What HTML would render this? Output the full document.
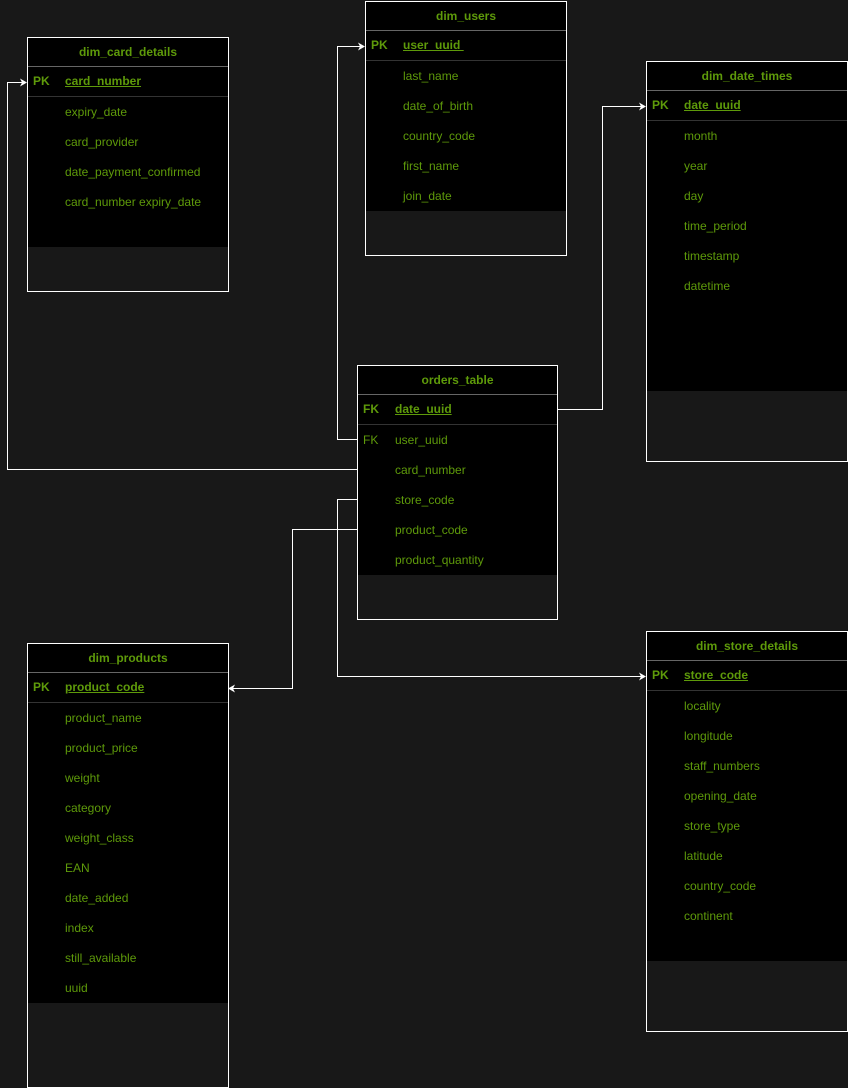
<!DOCTYPE html>
<html><head><style>
body{margin:0;width:848px;height:1081px;background:#181818;position:relative;overflow:hidden;font-family:"Liberation Sans",sans-serif;font-size:12px;color:#5e9a0a}
.t{position:absolute;border:1px solid #fff;box-sizing:border-box}
.h{height:28px;line-height:29px;text-align:center;font-weight:bold;background:#000;border-bottom:1px solid #666}
.r{height:30px;line-height:30px;background:#000;position:relative}
.r .k{position:absolute;left:5px;top:0}
.r .n{position:absolute;left:37px;top:0}
.pk{border-bottom:1px solid #333;height:29px;line-height:29px}
.pk .k{font-weight:bold}
.pk .n{font-weight:bold;text-decoration:underline}
svg{position:absolute;left:0;top:0}
</style></head><body>
<svg width="848" height="1081">
<g stroke="#fff" fill="none" stroke-width="1">
<polyline points="357.5,469.5 7.5,469.5 7.5,82.5 22,82.5"/>
<polyline points="357.5,439.5 337.5,439.5 337.5,46.5 360,46.5"/>
<polyline points="557.5,409.5 602.5,409.5 602.5,106.5 641,106.5"/>
<polyline points="357.5,529.5 292.5,529.5 292.5,688.5 233,688.5"/>
<polyline points="357.5,499.5 337.5,499.5 337.5,676.5 641,676.5"/>
</g>
<g fill="#fff">
<polygon points="27,82.5 20,78.5 22,82.5 20,86.5"/>
<polygon points="365,46.5 358,42.5 360,46.5 358,50.5"/>
<polygon points="646,106.5 639,102.5 641,106.5 639,110.5"/>
<polygon points="228,688.5 235,684.5 233,688.5 235,692.5"/>
<polygon points="646,676.5 639,672.5 641,676.5 639,680.5"/>
</g>
</svg>

<div class="t" style="left:27px;top:37px;width:202px;height:255px">
<div class="h">dim_card_details</div>
<div class="r pk"><span class="k">PK</span><span class="n">card_number</span></div>
<div class="r"><span class="n">expiry_date</span></div>
<div class="r"><span class="n">card_provider</span></div>
<div class="r"><span class="n">date_payment_confirmed</span></div>
<div class="r"><span class="n">card_number expiry_date</span></div>
<div class="r"></div>
</div>

<div class="t" style="left:365px;top:1px;width:202px;height:255px">
<div class="h">dim_users</div>
<div class="r pk"><span class="k">PK</span><span class="n">user_uuid&nbsp;</span></div>
<div class="r"><span class="n">last_name</span></div>
<div class="r"><span class="n">date_of_birth</span></div>
<div class="r"><span class="n">country_code</span></div>
<div class="r"><span class="n">first_name</span></div>
<div class="r"><span class="n">join_date</span></div>
</div>

<div class="t" style="left:646px;top:61px;width:202px;height:401px">
<div class="h">dim_date_times</div>
<div class="r pk"><span class="k">PK</span><span class="n">date_uuid</span></div>
<div class="r"><span class="n">month</span></div>
<div class="r"><span class="n">year</span></div>
<div class="r"><span class="n">day</span></div>
<div class="r"><span class="n">time_period</span></div>
<div class="r"><span class="n">timestamp</span></div>
<div class="r"><span class="n">datetime</span></div>
<div class="r"></div><div class="r"></div><div class="r"></div>
</div>

<div class="t" style="left:357px;top:365px;width:201px;height:255px">
<div class="h">orders_table</div>
<div class="r pk"><span class="k">FK</span><span class="n">date_uuid</span></div>
<div class="r"><span class="k">FK</span><span class="n">user_uuid</span></div>
<div class="r"><span class="n">card_number</span></div>
<div class="r"><span class="n">store_code</span></div>
<div class="r"><span class="n">product_code</span></div>
<div class="r"><span class="n">product_quantity</span></div>
</div>

<div class="t" style="left:27px;top:643px;width:202px;height:445px">
<div class="h">dim_products</div>
<div class="r pk"><span class="k">PK</span><span class="n">product_code</span></div>
<div class="r"><span class="n">product_name</span></div>
<div class="r"><span class="n">product_price</span></div>
<div class="r"><span class="n">weight</span></div>
<div class="r"><span class="n">category</span></div>
<div class="r"><span class="n">weight_class</span></div>
<div class="r"><span class="n">EAN</span></div>
<div class="r"><span class="n">date_added</span></div>
<div class="r"><span class="n">index</span></div>
<div class="r"><span class="n">still_available</span></div>
<div class="r"><span class="n">uuid</span></div>
</div>

<div class="t" style="left:646px;top:631px;width:202px;height:401px">
<div class="h">dim_store_details</div>
<div class="r pk"><span class="k">PK</span><span class="n">store_code</span></div>
<div class="r"><span class="n">locality</span></div>
<div class="r"><span class="n">longitude</span></div>
<div class="r"><span class="n">staff_numbers</span></div>
<div class="r"><span class="n">opening_date</span></div>
<div class="r"><span class="n">store_type</span></div>
<div class="r"><span class="n">latitude</span></div>
<div class="r"><span class="n">country_code</span></div>
<div class="r"><span class="n">continent</span></div>
<div class="r"></div>
</div>
</body></html>
